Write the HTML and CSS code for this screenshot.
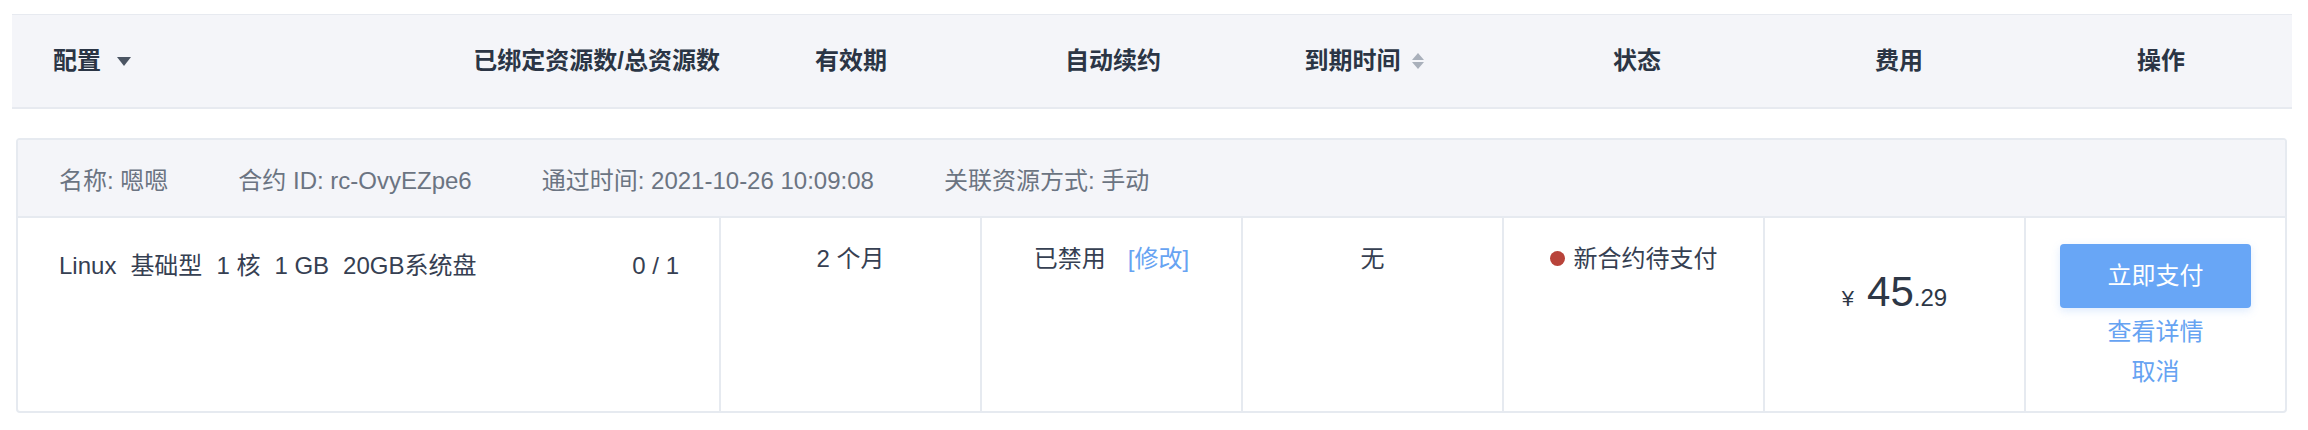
FILE: index.html
```html
<!DOCTYPE html>
<html lang="zh-CN">
<head>
<meta charset="utf-8">
<title>合约列表</title>
<link rel="stylesheet" href="styles.css">
</head>
<body>
<div class="page">
  <div class="thead">
    <div class="th th-config">配置<span class="caret"></span></div>
    <div class="th th-count">已绑定资源数/总资源数</div>
    <div class="th">有效期</div>
    <div class="th">自动续约</div>
    <div class="th th-sort">到期时间<span class="sort"><i class="up"></i><i class="down"></i></span></div>
    <div class="th">状态</div>
    <div class="th">费用</div>
    <div class="th">操作</div>
  </div>

  <div class="card">
    <div class="info">
      <span>名称: 嗯嗯</span>
      <span>合约 ID: rc-OvyEZpe6</span>
      <span>通过时间: 2021-10-26 10:09:08</span>
      <span>关联资源方式: 手动</span>
    </div>
    <div class="row">
      <div class="td td-config">
        <span>Linux</span><span>基础型</span><span>1 核</span><span>1 GB</span><span>20GB系统盘</span>
      </div>
      <div class="td td-count">0 / 1</div>
      <div class="td td-col">2 个月</div>
      <div class="td td-col"><span class="renew">已禁用<a class="link edit">[修改]</a></span></div>
      <div class="td td-col">无</div>
      <div class="td td-col td-status"><span class="dot"></span>新合约待支付</div>
      <div class="td td-col td-price"><span class="yen">¥</span><span class="int">45</span><span class="dec">.29</span></div>
      <div class="td td-col td-actions">
        <button class="btn-pay" type="button">立即支付</button>
        <a class="link action first">查看详情</a>
        <a class="link action">取消</a>
      </div>
    </div>
  </div>
</div>
</body>
</html>
```

FILE: styles.css
```css
* {
  box-sizing: border-box;
}

html,
body {
  margin: 0;
  background: #ffffff;
}

body {
  font-family: "Liberation Sans", "Noto Sans CJK SC", sans-serif;
  font-size: 24px;
  color: #364052;
}

.page {
  padding: 14px 16px 0 12px;
}

/* ---------- table header ---------- */
.thead {
  display: grid;
  grid-template-columns: 1fr auto repeat(6, 262px);
  align-items: center;
  height: 95px;
  background: #f4f5f9;
  border-top: 1px solid #e7eaf0;
  border-bottom: 2px solid #e7eaf0;
  font-weight: 600;
  color: #2b3545;
}

.th {
  text-align: center;
  line-height: 36px;
}

.th-config {
  display: flex;
  align-items: center;
  padding-left: 41px;
}

.th-count {
  text-align: right;
}

.caret {
  width: 0;
  height: 0;
  margin-left: 16px;
  border-left: 7px solid transparent;
  border-right: 7px solid transparent;
  border-top: 9px solid #4b5563;
}

.th-sort {
  display: flex;
  justify-content: center;
  align-items: center;
  padding-right: 22px;
}

.sort {
  display: flex;
  flex-direction: column;
  gap: 2px;
  margin-left: 11px;
}

.sort i {
  display: block;
  width: 0;
  height: 0;
  border-left: 6px solid transparent;
  border-right: 6px solid transparent;
}

.sort .up {
  border-bottom: 7px solid #a9b0bb;
}

.sort .down {
  border-top: 7px solid #a9b0bb;
}

/* ---------- contract card ---------- */
.card {
  margin: 29px 5px 0 4px;
  border: 2px solid #e6eaf0;
  border-radius: 4px;
  overflow: hidden;
}

.info {
  display: flex;
  align-items: center;
  gap: 70px;
  height: 78px;
  padding-left: 41px;
  background: #f4f5f9;
  border-bottom: 2px solid #e6eaf0;
  color: #6b7482;
}

.row {
  display: grid;
  grid-template-columns: 1fr auto repeat(6, 261px);
  height: 193px;
}

.td {
  line-height: 36px;
  padding-top: 23px;
}

.td-config {
  display: flex;
  align-items: flex-start;
  gap: 14px;
  padding: 30px 0 0 41px;
}

.td-count {
  padding: 30px 40px 0 0;
  text-align: right;
}

.td-col {
  border-left: 2px solid #e6eaf0;
  text-align: center;
}

.renew {
  display: inline-flex;
  gap: 22px;
}

.link {
  color: #66a3f2;
  cursor: pointer;
}

.td-status {
  display: flex;
  justify-content: center;
  align-items: flex-start;
}

.dot {
  width: 15px;
  height: 15px;
  margin: 10px 9px 0 0;
  border-radius: 50%;
  background: #b8433a;
}

.td-price {
  display: flex;
  justify-content: center;
  align-items: baseline;
  padding-top: 50px;
  line-height: 48px;
  color: #2d3746;
}

.yen {
  font-size: 22px;
  margin-right: 13px;
}

.int {
  font-size: 42px;
}

.dec {
  font-size: 24px;
}

.td-actions {
  display: flex;
  flex-direction: column;
  align-items: center;
  padding-top: 26px;
}

.btn-pay {
  width: 191px;
  height: 64px;
  border: none;
  border-radius: 4px;
  background: #68a6f6;
  box-shadow: 0 3px 8px rgba(104, 166, 246, 0.22);
  color: #ffffff;
  font-family: inherit;
  font-size: 24px;
  line-height: 64px;
  padding: 0;
}

.action {
  display: block;
  line-height: 40px;
}

.action.first {
  margin-top: 4px;
}
```
